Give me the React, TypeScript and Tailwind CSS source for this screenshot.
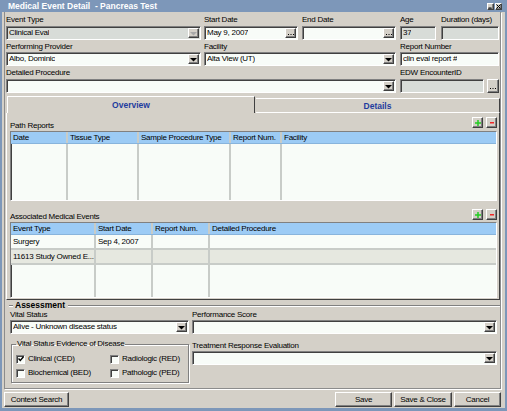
import React from 'react';

const txt = 'text-[8px] leading-[10px] tracking-[-0.25px] text-black whitespace-nowrap';
const sunken =
  'border border-t-[#808080] border-l-[#808080] border-b-white border-r-white shadow-[inset_1px_1px_0_#404040]';
const raised =
  'border border-t-white border-l-white border-b-[#404040] border-r-[#404040] shadow-[inset_-1px_-1px_0_#808080]';

function Label({ children, className = '' }: { children?: React.ReactNode; className?: string }) {
  return <div className={`h-[10px] ${txt} ${className}`}>{children}</div>;
}

function DropArrow({ disabled = false }: { disabled?: boolean }) {
  return (
    <div className={`ml-auto w-[11px] h-[10px] shrink-0 bg-[#d4d0c8] ${raised} flex items-center justify-center`}>
      <svg width="7" height="5" viewBox="0 0 7 5">
        <path d="M0 1h7L3.5 4.5z" fill={disabled ? '#a8a8a8' : '#000'} />
      </svg>
    </div>
  );
}

function Dots({ className = '' }: { className?: string }) {
  return (
    <div className={`w-[11px] h-[10px] shrink-0 bg-[#d4d0c8] ${raised} flex items-end justify-center pb-[1px] ${className}`}>
      <svg width="6" height="2" viewBox="0 0 6 2">
        <rect x="0" y="0" width="1" height="1" fill="#000" />
        <rect x="2.5" y="0" width="1" height="1" fill="#000" />
        <rect x="5" y="0" width="1" height="1" fill="#000" />
      </svg>
    </div>
  );
}

function Box({
  value = '',
  className = '',
  disabled = false,
  combo = false,
  dots = false,
}: {
  value?: string;
  className?: string;
  disabled?: boolean;
  combo?: boolean;
  dots?: boolean;
}) {
  return (
    <div
      className={`h-[14px] ${sunken} ${disabled ? 'bg-[#d8dcd8]' : 'bg-[#f8fcf8]'} flex items-center pl-[2px] pr-[1px] ${className}`}
    >
      <span className={`${txt} overflow-hidden`}>{value}</span>
      {combo && <DropArrow disabled={disabled} />}
      {dots && <Dots className="ml-auto" />}
    </div>
  );
}

function PlusMinus({ className = '' }: { className?: string }) {
  return (
    <div className={`flex gap-[3px] ${className}`}>
      <div className={`w-[11px] h-[11px] bg-[#d4d0c8] ${raised} flex items-center justify-center`}>
        <svg width="6" height="6" viewBox="0 0 6 6">
          <path d="M2.25 0h1.5v2.25H6v1.5H3.75V6h-1.5V3.75H0v-1.5h2.25z" fill="#22cc22" />
        </svg>
      </div>
      <div className={`w-[11px] h-[11px] bg-[#d4d0c8] ${raised} flex items-center justify-center`}>
        <svg width="4" height="2" viewBox="0 0 4 2">
          <rect width="4" height="1.5" fill="#f02828" />
        </svg>
      </div>
    </div>
  );
}

function Row({ widths, cells, cls }: { widths: string[]; cells: string[]; cls: string }) {
  return (
    <div className={`flex ${cls}`}>
      {widths.map((w, i) => (
        <div
          key={i}
          className={`${w} ${i === widths.length - 1 ? '' : 'shrink-0 border-r-2 border-[#c8ccc8]'} h-full flex items-center pl-[2px] overflow-hidden ${txt}`}
        >
          {cells[i] ?? ''}
        </div>
      ))}
    </div>
  );
}

function Table({
  widths,
  headers,
  rows,
  className = '',
}: {
  widths: string[];
  headers: string[];
  rows: { cells: string[]; bg: string }[];
  className?: string;
}) {
  return (
    <div className={`${sunken} bg-[#f8fcf8] flex flex-col overflow-hidden ${className}`}>
      <Row widths={widths} cells={headers} cls="h-[12px] shrink-0 bg-[#9ccbf5] border-b border-[#88b4dc]" />
      {rows.map((r, i) => (
        <Row key={i} widths={widths} cells={r.cells} cls={`h-[15px] shrink-0 border-b-2 border-[#c8ccc8] ${r.bg}`} />
      ))}
      <Row widths={widths} cells={[]} cls="flex-1" />
    </div>
  );
}

function Check({ label, checked = false }: { label: string; checked?: boolean }) {
  return (
    <div className="flex items-center gap-[3px] h-[14px]">
      <div className={`w-[9px] h-[9px] ${sunken} bg-[#f8fcf8] flex items-center justify-center`}>
        {checked && (
          <svg width="6" height="6" viewBox="0 0 6 6">
            <path d="M0.5 2.5l1.8 2L5.5 0.8" stroke="#000" strokeWidth="1.4" fill="none" />
          </svg>
        )}
      </div>
      <span className={txt}>{label}</span>
    </div>
  );
}

function Btn({ children, className = '' }: { children: React.ReactNode; className?: string }) {
  return (
    <div className={`h-[15px] bg-[#d4d0c8] ${raised} flex items-center justify-center ${txt} ${className}`}>
      {children}
    </div>
  );
}

function TitleBtn({ kind }: { kind: 'min' | 'close' }) {
  return (
    <div className={`w-[7px] h-[7px] bg-[#d4d0c8] ${raised} flex items-center justify-center`}>
      <svg width="5" height="5" viewBox="0 0 5 5">
        {kind === 'min' ? (
          <rect x="0.5" y="3.5" width="3" height="1" fill="#000" />
        ) : (
          <path d="M0.5 0.5l4 4M4.5 0.5l-4 4" stroke="#000" strokeWidth="1" />
        )}
      </svg>
    </div>
  );
}

export default function App() {
  return (
    <div className="w-[507px] h-[411px] bg-[#7d97b9] flex flex-col overflow-hidden font-['Liberation_Sans',Arial,sans-serif]">
      {/* title bar */}
      <div className="h-[12px] shrink-0 flex items-center pl-[8px] pr-[5px]">
        <span className="text-[8.5px] leading-[12px] font-bold text-white whitespace-nowrap">
          Medical Event Detail&nbsp; - Pancreas Test
        </span>
        <div className="ml-auto flex gap-[1px]">
          <TitleBtn kind="min" />
          <TitleBtn kind="close" />
        </div>
      </div>

      <div className="flex-1 mx-[2px] mb-[3px] bg-[#d4d0c8] flex flex-col">
        <div className="flex-1 ml-[2px] mr-[4px] border-l border-r border-b border-[#8c8c8c] shadow-[1px_1px_0_#fff] pl-[1px] pt-[3px] flex flex-col">
          {/* row 1 */}
          <div className="flex">
            <div className="w-[195px]">
              <Label>Event Type</Label>
              <Box className="mt-[1px]" value="Clinical Eval" disabled combo />
            </div>
            <div className="w-[94px] ml-[3px]">
              <Label>Start Date</Label>
              <Box className="mt-[1px]" value="May 9, 2007" dots />
            </div>
            <div className="w-[94px] ml-[4px]">
              <Label>End Date</Label>
              <Box className="mt-[1px]" dots />
            </div>
            <div className="w-[36px] ml-[4px]">
              <Label>Age</Label>
              <Box className="mt-[1px]" value="37" disabled />
            </div>
            <div className="w-[58px] ml-[5px]">
              <Label>Duration (days)</Label>
              <Box className="mt-[1px]" disabled />
            </div>
          </div>

          {/* row 2 */}
          <div className="flex mt-[2px]">
            <div className="w-[195px]">
              <Label>Performing Provider</Label>
              <Box value="Albo, Dominic" combo />
            </div>
            <div className="w-[192px] ml-[3px]">
              <Label>Facility</Label>
              <Box value="Alta View (UT)" combo />
            </div>
            <div className="w-[99px] ml-[4px]">
              <Label>Report Number</Label>
              <Box value="clin eval report #" />
            </div>
          </div>

          {/* row 3 */}
          <div className="flex mt-[2px]">
            <div className="w-[390px]">
              <Label>Detailed Procedure</Label>
              <Box className="mt-[1px]" combo />
            </div>
            <div className="w-[99px] ml-[4px]">
              <Label>EDW EncounterID</Label>
              <div className="flex mt-[1px] items-center">
                <Box className="w-[84px]" disabled />
                <div className={`ml-[3px] w-[12px] h-[14px] bg-[#d4d0c8] ${raised} flex items-end justify-center pb-[3px]`}>
                  <svg width="6" height="1" viewBox="0 0 6 1">
                    <rect x="0" width="1" height="1" fill="#000" />
                    <rect x="2.5" width="1" height="1" fill="#000" />
                    <rect x="5" width="1" height="1" fill="#000" />
                  </svg>
                </div>
              </div>
            </div>
          </div>

          {/* tabs */}
          <div className="mt-[3px] w-[494px] flex flex-col">
            <div className="flex h-[17px]">
              <div className="ml-[1px] w-[248px] border-t border-l border-r border-t-white border-l-white border-r-[#404040] flex items-center justify-center text-[8.5px] leading-[10px] font-bold text-[#1f3c9e]">
                Overview
              </div>
              <div className="flex-1 ml-[1px] mt-[2px] border-t border-r border-b border-t-white border-r-[#404040] border-b-white flex items-center justify-center text-[8.5px] leading-[10px] font-bold text-[#1f3c9e]">
                Details
              </div>
            </div>
            <div className="h-[187px] border-l border-r border-b border-l-white border-r-[#404040] border-b-[#404040] pl-[3px] pr-[2px] pt-[4px] pb-[1px] flex flex-col">
              <div className="h-[14px] flex justify-between">
                <Label className="self-end">Path Reports</Label>
                <PlusMinus className="self-start" />
              </div>
              <Table
                className="h-[70px]"
                widths={['w-[57px]', 'w-[71px]', 'w-[92px]', 'w-[51px]', 'flex-1']}
                headers={['Date', 'Tissue Type', 'Sample Procedure Type', 'Report Num.', 'Facility']}
                rows={[]}
              />
              <div className="h-[14px] mt-[7px] flex justify-between">
                <Label className="self-end">Associated Medical Events</Label>
                <PlusMinus className="mt-[1px] self-start" />
              </div>
              <Table
                className="h-[76px]"
                widths={['w-[85px]', 'w-[57px]', 'w-[57px]', 'flex-1']}
                headers={['Event Type', 'Start Date', 'Report Num.', 'Detailed Procedure']}
                rows={[
                  { cells: ['Surgery', 'Sep 4, 2007', '', ''], bg: 'bg-[#f8fcf8]' },
                  { cells: ['11613 Study Owned E...', '', '', ''], bg: 'bg-[#e6e8e0]' },
                ]}
              />
            </div>
          </div>

          {/* assessment */}
          <div className="mt-[1px] h-[9px] flex items-center pl-[3px]">
            <div className="w-[4px] h-[2px] border-t border-t-[#808080] border-b border-b-white" />
            <span className="ml-[2px] text-[8.5px] leading-[9px] font-bold text-black whitespace-nowrap">Assessment</span>
            <div className="ml-[3px] flex-1 h-[2px] border-t border-t-[#808080] border-b border-b-white" />
          </div>
          <div className="flex pl-[4px]">
            <div className="w-[179px]">
              <Label>Vital Status</Label>
              <Box value="Alive - Unknown disease status" combo />
              <fieldset className="ml-[1px] mt-[5px] w-[178px] border border-[#808080] shadow-[inset_1px_1px_0_#fff,1px_1px_0_#fff] pl-[4px] pt-[3px] pb-[2px]">
                <legend className={`px-[1px] ${txt}`}>Vital Status Evidence of Disease</legend>
                <div className="grid grid-cols-[94px_1fr]">
                  <Check label="Clinical (CED)" checked />
                  <Check label="Radiologic (RED)" />
                  <Check label="Biochemical (BED)" />
                  <Check label="Pathologic (PED)" />
                </div>
              </fieldset>
            </div>
            <div className="w-[305px] ml-[3px]">
              <Label>Performance Score</Label>
              <Box combo />
              <Label className="mt-[7px]">Treatment Response Evaluation</Label>
              <Box combo />
            </div>
          </div>
        </div>

        {/* bottom buttons */}
        <div className="h-[15px] mt-[3px] mb-[1px] pl-[2px] pr-[4px] flex gap-[2px]">
          <Btn className="w-[65px]">Context Search</Btn>
          <Btn className="w-[57px] ml-auto">Save</Btn>
          <Btn className="w-[58px]">Save &amp; Close</Btn>
          <Btn className="w-[47px]">Cancel</Btn>
        </div>
      </div>
    </div>
  );
}
